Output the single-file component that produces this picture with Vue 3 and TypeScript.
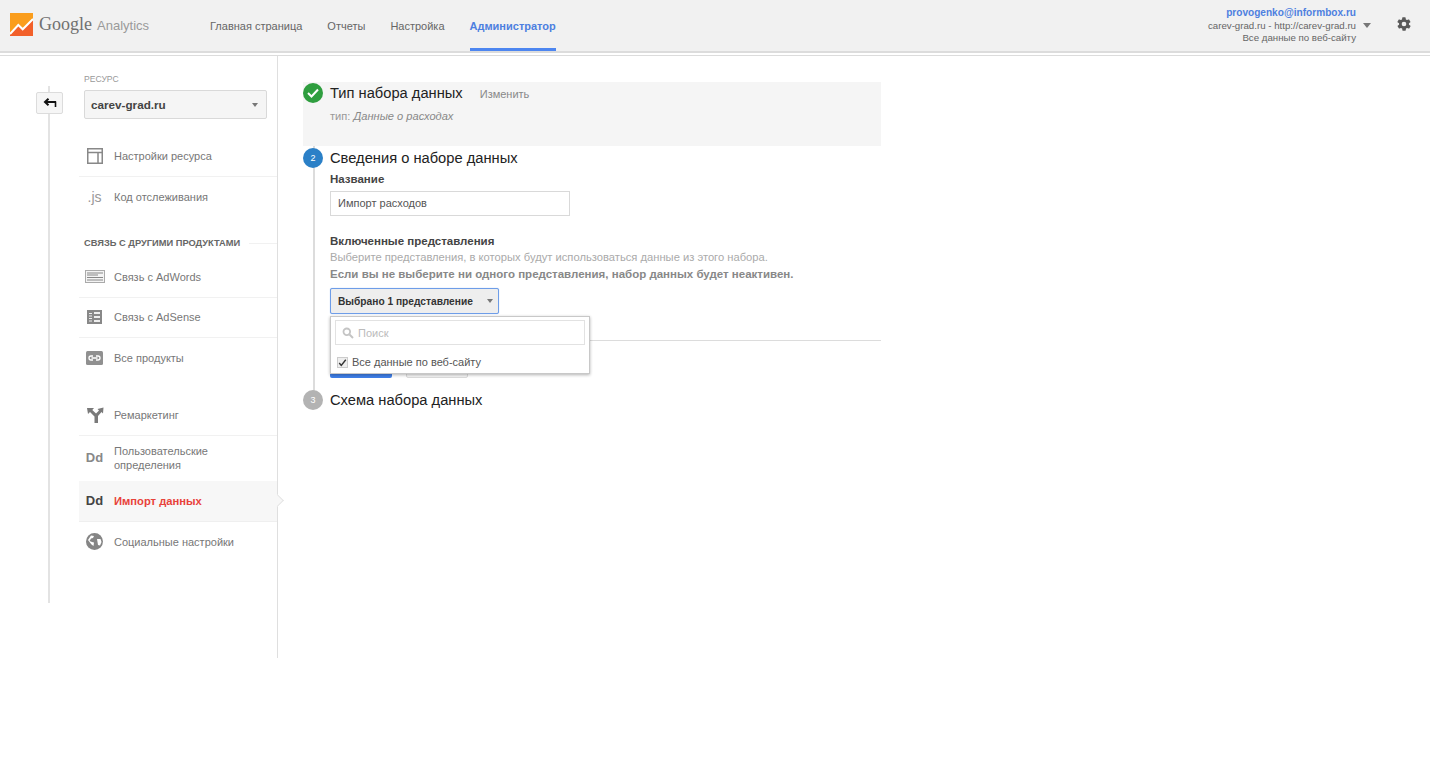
<script setup lang="ts">
const tabs = [
  { label: 'Главная страница', active: false },
  { label: 'Отчеты', active: false },
  { label: 'Настройка', active: false },
  { label: 'Администратор', active: true },
]
</script>

<template>
  <div class="page">
    <header class="top">
      <div class="logo">
        <svg width="23" height="23" viewBox="0 0 23 23" class="mark">
          <rect width="23" height="23" fill="#fa9d1c" />
          <path d="M0 23V20.500L8.300 11.800L12.700 16L23 6V23Z" fill="#f2602a" />
          <path d="M0 21L8.300 12L12.700 16.300L23 6" fill="none" stroke="#fff" stroke-width="2" />
        </svg>
        <span class="google">Google</span>
        <span class="analytics">Analytics</span>
      </div>
      <nav class="tabs">
        <a v-for="t in tabs" :key="t.label" class="tab" :class="{ on: t.active }">{{ t.label }}</a>
      </nav>
      <div class="account">
        <div class="acct-text">
          <div class="email">provogenko@informbox.ru</div>
          <div class="acct-line">carev-grad.ru - http://carev-grad.ru</div>
          <div class="acct-line">Все данные по веб-сайту</div>
        </div>
        <span class="acct-caret"></span>
        <svg class="gear" width="16" height="16" viewBox="0 0 24 24">
          <path fill="#5a5a5a" d="M19.4 13a7.5 7.5 0 0 0 0-2l2.1-1.6a.5.5 0 0 0 .1-.7l-2-3.4a.5.5 0 0 0-.6-.2l-2.5 1a7.5 7.5 0 0 0-1.7-1l-.4-2.6a.5.5 0 0 0-.5-.5h-4a.5.5 0 0 0-.5.5l-.4 2.6a7.5 7.5 0 0 0-1.7 1l-2.5-1a.5.5 0 0 0-.6.2l-2 3.4a.5.5 0 0 0 .1.7L4.6 11a7.5 7.5 0 0 0 0 2l-2.1 1.6a.5.5 0 0 0-.1.7l2 3.4a.5.5 0 0 0 .6.2l2.5-1a7.5 7.5 0 0 0 1.7 1l.4 2.6a.5.5 0 0 0 .5.5h4a.5.5 0 0 0 .5-.5l.4-2.6a7.5 7.5 0 0 0 1.7-1l2.5 1a.5.5 0 0 0 .6-.2l2-3.4a.5.5 0 0 0-.1-.7ZM12 15.500a3.500 3.500 0 1 1 0-7 3.500 3.500 0 0 1 0 7Z" />
        </svg>
      </div>
    </header>

    <div class="body">
      <div class="rail">
        <button class="back">
          <svg width="14" height="10" viewBox="0 0 14 10">
            <path d="M13 4H3M5.500 .8L2 4L5.500 7.200" fill="none" stroke="#111" stroke-width="2" />
            <path d="M12.500 3.500V9" stroke="#111" stroke-width="1.600" />
          </svg>
        </button>
      </div>

      <aside class="side">
        <div class="res-label">РЕСУРС</div>
        <div class="res-select"><span>carev-grad.ru</span><i class="caret"></i></div>

        <ul class="menu first">
          <li class="item">
            <span class="ico"><svg width="16" height="16" viewBox="0 0 16 16"><path d="M.75.75h14.500v14.500H.75ZM1 4.500h14M11 4.500V15" fill="none" stroke="#888" stroke-width="1.500" /></svg></span>
            <span>Настройки ресурса</span>
          </li>
          <li class="item">
            <span class="ico js">.js</span>
            <span>Код отслеживания</span>
          </li>
        </ul>

        <div class="heading"><span>СВЯЗЬ С ДРУГИМИ ПРОДУКТАМИ</span></div>

        <ul class="menu">
          <li class="item">
            <span class="ico"><svg width="20" height="13" viewBox="0 0 20 13"><rect x=".5" y=".5" width="19" height="12" fill="#f4f4f4" stroke="#aaa" /><path d="M2 3h16M2 5h11M2 7.500h16M2 10h16" stroke="#888" stroke-width="1.200" /></svg></span>
            <span>Связь с AdWords</span>
          </li>
          <li class="item">
            <span class="ico"><svg width="15" height="14" viewBox="0 0 15 14"><rect width="15" height="14" fill="#888" /><path d="M7 2h6v2H7ZM7 6h6v2H7ZM7 10h6v2H7ZM2 3h3v1H2ZM2 5.500h3v1H2ZM2 8h3v1H2ZM2 10.500h3v1H2Z" fill="#eee" /></svg></span>
            <span>Связь с AdSense</span>
          </li>
          <li class="item">
            <span class="ico"><svg width="17" height="14" viewBox="0 0 17 14"><rect width="17" height="14" rx="1.500" fill="#909090" /><path d="M7 5H5a2 2 0 0 0 0 4h2M10 5h2a2 2 0 0 1 0 4h-2M5.500 7h6" fill="none" stroke="#fff" stroke-width="1.300" /></svg></span>
            <span>Все продукты</span>
          </li>
        </ul>

        <ul class="menu second">
          <li class="item">
            <span class="ico"><svg width="18" height="16" viewBox="0 0 18 16"><path d="M1 1h7L6.300 2.900 10 6.500 13 3.500 11.500 2 17.500 .5 17 6.500 15.500 5 12 9V16H8.500V9.500L4 5 2 7Z" fill="#7a7a7a" /></svg></span>
            <span>Ремаркетинг</span>
          </li>
          <li class="item tall">
            <span class="ico dd">Dd</span>
            <span>Пользовательские<br />определения</span>
          </li>
          <li class="item active">
            <span class="ico dd">Dd</span>
            <span>Импорт данных</span>
          </li>
          <li class="item plain">
            <span class="ico"><svg width="17" height="17" viewBox="0 0 17 17"><circle cx="8.500" cy="8.500" r="8.500" fill="#858585" /><path d="M5 2.500 8 3 7 5 5 5.500 3.500 8l2.500 1 2 .5L7.500 13l-2-1.500L3.500 9 2 7ZM11 6h3.500l1 3-1.500 3.500-2-.5-.5-3Z" fill="#fff" /></svg></span>
            <span>Социальные настройки</span>
          </li>
        </ul>
      </aside>

      <main class="main">
        <section class="step done-step">
          <span class="num ok">
            <svg width="12" height="10" viewBox="0 0 12 10"><path d="M1 5l3.500 3.500L11 1.500" fill="none" stroke="#fff" stroke-width="2" /></svg>
          </span>
          <div class="step-head">
            <h2>Тип набора данных</h2>
            <a class="change">Изменить</a>
          </div>
          <p class="type">тип: <em>Данные о расходах</em></p>
        </section>

        <section class="step current">
          <span class="num blue">2</span>
          <h2>Сведения о наборе данных</h2>
          <label class="lbl">Название</label>
          <div class="input">Импорт расходов</div>
          <label class="lbl views">Включенные представления</label>
          <p class="hint">Выберите представления, в которых будут использоваться данные из этого набора.</p>
          <p class="warn">Если вы не выберите ни одного представления, набор данных будет неактивен.</p>
          <div class="multi">
            <button class="multi-btn">Выбрано 1 представление<i class="caret"></i></button>
            <div class="popup">
              <div class="search">
                <svg width="12" height="12" viewBox="0 0 12 12"><circle cx="4.800" cy="4.800" r="3.300" fill="none" stroke="#c4c4c4" stroke-width="1.800" /><path d="M7.500 7.500 11 11" stroke="#c4c4c4" stroke-width="2" /></svg>
                <span>Поиск</span>
              </div>
              <div class="opt">
                <span class="box"><svg width="11" height="10" viewBox="0 0 11 10"><path d="M1.500 5 4 8 9.500 1" fill="none" stroke="#333" stroke-width="1.700" /></svg></span>
                <span>Все данные по веб-сайту</span>
              </div>
            </div>
          </div>
          <div class="actions" aria-hidden="true">
            <button class="primary"></button>
            <button class="cancel"></button>
          </div>
        </section>

        <section class="step last">
          <span class="num grey">3</span>
          <h2>Схема набора данных</h2>
        </section>
      </main>
    </div>
  </div>
</template>

<style scoped>
.page {
  font-family: "Liberation Sans", Arial, sans-serif;
  color: #333;
  font-size: 12px;
  min-height: 766px;
  background: #fff;
}
.top {
  height: 51px;
  background: #f1f1f1;
  border-bottom: 2px solid #dcdcdc;
  display: flex;
  align-items: stretch;
  box-sizing: content-box;
}
.logo {
  width: 210px;
  padding-left: 10px;
  box-sizing: border-box;
  display: flex;
  align-items: center;
  padding-bottom: 2px;
}
.mark { flex: none; margin-right: 6px; }
.google { font-family: "Liberation Serif", serif; font-size: 18px; color: #707070; margin-right: 5px; }
.analytics { font-size: 13px; color: #9a9a9a; padding-top: 1px; }
.tabs { display: flex; gap: 25px; }
.tab {
  color: #666;
  line-height: 52px;
  height: 51px;
  box-sizing: border-box;
  font-size: 11px;
}
.tab.on {
  color: #4d7fe0;
  font-weight: 700;
  border-bottom: 3px solid #4d86f0;
}
.account {
  margin-left: auto;
  display: flex;
  align-items: flex-start;
  padding: 7px 18px 0 0;
}
.acct-text { text-align: right; font-size: 9.700px; color: #666; line-height: 12.500px; margin-right: 1px; }
.email { color: #4d7fe0; font-weight: 700; font-size: 10.100px; }
.acct-caret {
  margin: 16px 0 0 6px;
  border: 4.500px solid transparent;
  border-top: 5px solid #777;
  border-bottom: 0;
}
.gear { margin: 9px 0 0 25px; }

.body {
  display: flex;
  border-top: 1px solid #dcdcdc;
  margin-top: 2px;
}
.rail {
  width: 79px;
  flex: none;
  position: relative;
  padding-top: 36px;
  box-sizing: border-box;
  height: 547px;
}
.rail::before {
  content: "";
  position: absolute;
  left: 48px;
  top: 30px;
  bottom: 0;
  width: 2px;
  background: #e3e3e3;
}
.back {
  position: relative;
  display: flex;
  align-items: center;
  justify-content: center;
  margin-left: 36px;
  width: 27px;
  height: 22px;
  padding: 0;
  background: #f6f6f6;
  border: 1px solid #dcdcdc;
  border-radius: 2px;
}
.side {
  width: 199px;
  flex: none;
  height: 602px;
  box-sizing: border-box;
  border-right: 1px solid #dfdfdf;
  padding-top: 18px;
}
.res-label { font-size: 8.600px; color: #999; margin: 0 0 5px 5px; line-height: 11px; }
.res-select {
  margin-left: 5px;
  width: 183px;
  height: 29px;
  box-sizing: border-box;
  border: 1px solid #d9d9d9;
  border-radius: 2px;
  background: #f5f5f5;
  display: flex;
  align-items: center;
  justify-content: space-between;
  padding: 0 8px 0 6px;
  font-weight: 700;
  color: #444;
  font-size: 11.700px;
}
.caret {
  display: inline-block;
  border: 3.500px solid transparent;
  border-top: 4px solid #777;
  border-bottom: 0;
}
.menu { list-style: none; margin: 8px 0 0; padding: 0; }
.menu.first { margin-top: 17px; }
.menu.second { margin-top: 16.500px; }
.item {
  height: 40.500px;
  box-sizing: border-box;
  border-bottom: 1px solid #f1f1f1;
  display: flex;
  align-items: center;
  color: #777;
  font-size: 11px;
  line-height: 14px;
  position: relative;
}
.item:last-child { border-bottom: 0; }
.item.tall { height: 45.500px; border-bottom: 0; }
.item.plain { border-bottom: 0; }
.ico {
  width: 35px;
  flex: none;
  display: flex;
  justify-content: center;
  padding-right: 4px;
  box-sizing: border-box;
}
.js { font-size: 14px; color: #999; }
.dd { font-size: 13px; font-weight: 700; color: #888; }
.active { background: #f7f7f7; border-bottom: 1px solid #efefef; color: #e8423a; font-weight: 700; font-size: 11.200px; }
.active .dd { color: #444; font-size: 13px; }
.active::after {
  content: "";
  position: absolute;
  right: -5px;
  top: 15px;
  width: 8px;
  height: 8px;
  background: #f7f7f7;
  border-top: 1px solid #e4e4e4;
  border-right: 1px solid #e4e4e4;
  transform: rotate(45deg);
}
.heading {
  margin: 20px 0 0 5px;
  height: 12px;
  font-size: 9.300px;
  line-height: 12px;
  font-weight: 700;
  color: #666;
  display: flex;
  align-items: center;
  gap: 9px;
}
.heading::after { content: ""; flex: 1; height: 1px; background: #f1f1f1; }

.main { width: 578px; padding: 26px 0 0 25px; box-sizing: content-box; position: relative; }
.main::before {
  content: "";
  position: absolute;
  left: 35px;
  top: 36px;
  height: 310px;
  width: 2px;
  background: #dcdcdc;
}
.step { position: relative; padding-left: 27px; }
.num {
  position: absolute;
  left: 0;
  top: 0;
  width: 20px;
  height: 20px;
  border-radius: 50%;
  display: flex;
  align-items: center;
  justify-content: center;
  font-size: 9px;
  color: #fff;
}
.ok { background: #2f9e3f; }
.blue { background: #2b80c7; }
.grey { background: #b3b3b3; }
h2 { margin: 0; font-size: 14.700px; font-weight: 400; color: #222; line-height: 20px; }
.done-step {
  background: #f5f5f5;
  height: 64px;
  box-sizing: border-box;
  padding-top: 1px;
}
.done-step .num { top: 1px; }
.step-head { display: flex; align-items: baseline; gap: 17px; }
.change { color: #888; font-size: 11px; }
.type { margin: 7px 0 0; color: #999; font-size: 11.100px; }
.type em { color: #888; }
.current { padding-top: 2px; height: 244px; box-sizing: border-box; }
.current .num { top: 2px; }
.lbl { display: block; font-weight: 700; font-size: 11.500px; line-height: 14px; margin-top: 4px; color: #444; }
.input {
  margin-top: 5px;
  width: 240px;
  height: 25px;
  box-sizing: border-box;
  border: 1px solid #d9d9d9;
  padding: 0 7px;
  line-height: 23px;
  color: #555;
  font-size: 11px;
}
.views { margin-top: 18px; }
.hint { margin: 2px 0 0; color: #aaa; font-size: 11.200px; line-height: 15px; white-space: nowrap; }
.warn { margin: 2px 0 0; color: #888; font-weight: 700; font-size: 11.500px; line-height: 15px; white-space: nowrap; }
.multi { position: relative; margin-top: 6px; }
.multi-btn {
  width: 169px;
  height: 26px;
  box-sizing: border-box;
  border: 1px solid #6e9de8;
  border-radius: 2px;
  background: #eee;
  font: 700 10.200px "Liberation Sans", Arial, sans-serif;
  color: #333;
  display: flex;
  align-items: center;
  justify-content: space-between;
  padding: 0 5px 0 7px;
  white-space: nowrap;
  box-shadow: 0 0 1px #8fb4ee;
}
.popup {
  position: absolute;
  left: 0;
  top: 28px;
  width: 260px;
  height: 58px;
  box-sizing: border-box;
  background: #fff;
  border: 1px solid #c8c8c8;
  box-shadow: 0 1px 3px rgba(0, 0, 0, .3);
  padding: 3px 4px 4px;
  z-index: 2;
}
.search {
  height: 25px;
  box-sizing: border-box;
  border: 1px solid #e2e2e2;
  display: flex;
  align-items: center;
  gap: 4px;
  padding-left: 6px;
  color: #bbb;
  font-size: 11px;
}
.opt {
  display: flex;
  align-items: center;
  gap: 4px;
  margin-top: 11px;
  font-size: 11px;
  line-height: 13px;
  color: #555;
  padding-left: 2px;
}
.box {
  width: 9px;
  height: 9px;
  border: 1px solid #ccc;
  background: #eee;
  display: flex;
  align-items: center;
  justify-content: center;
  overflow: visible;
}
.actions {
  border-top: 1px solid #dcdcdc;
  margin-top: 26px;
  padding-top: 10px;
  display: flex;
  gap: 14px;
}
.primary {
  width: 62px;
  height: 27px;
  background: #3f7fe8;
  border: 0;
  border-radius: 2px;
}
.cancel {
  width: 62px;
  height: 27px;
  background: #f6f6f6;
  border: 1px solid #dcdcdc;
  border-radius: 2px;
}
</style>
